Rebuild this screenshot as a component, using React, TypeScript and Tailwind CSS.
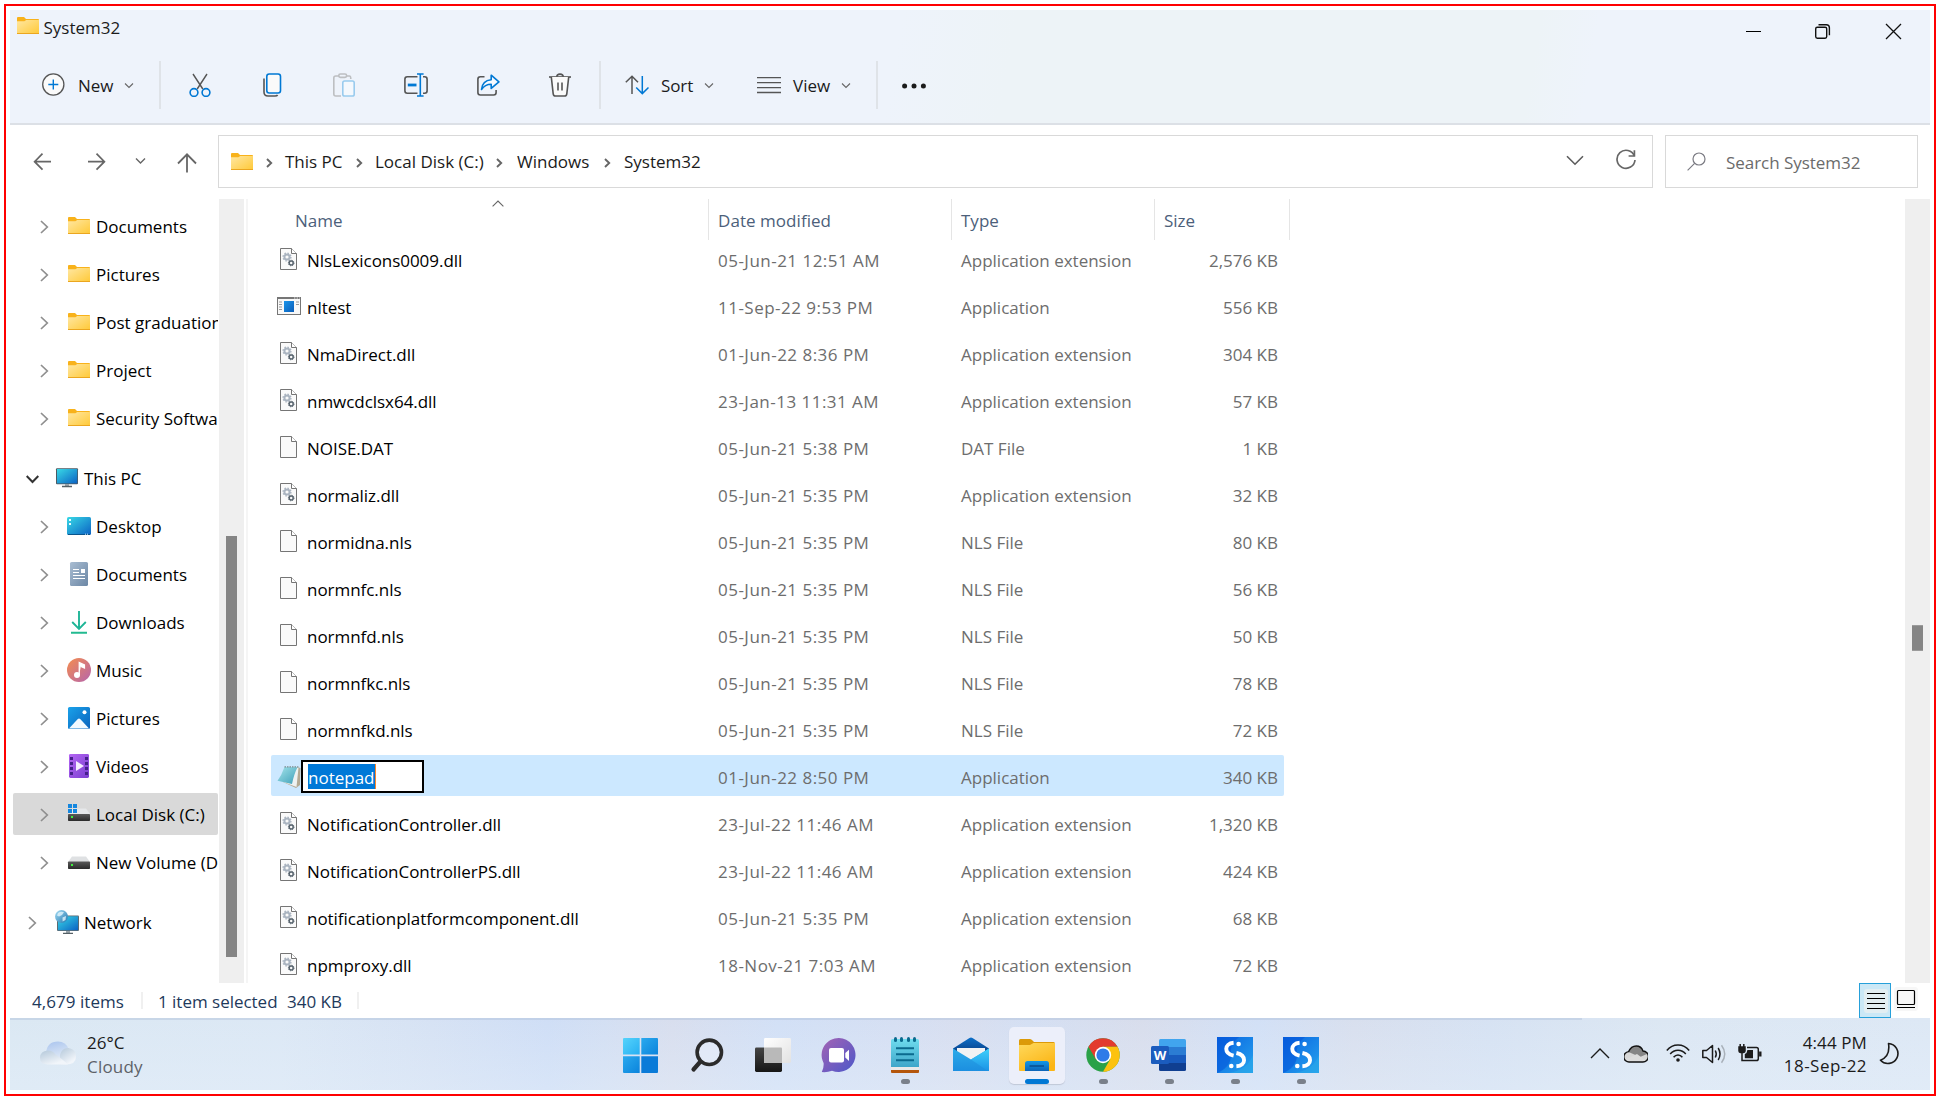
import React from "react";

type P = { className?: string };

/* Shared gradients used by the coloured icons. */
function Gradients() {
  const g = (id: string, a: string, b: string, x2 = 1, y2 = 1) => (
    <linearGradient id={id} x1="0" y1="0" x2={x2} y2={y2}>
      <stop offset="0" stopColor={a} />
      <stop offset="1" stopColor={b} />
    </linearGradient>
  );
  return (
    <svg width="0" height="0" className="absolute" aria-hidden="true">
      <defs>
        {g("gFolder", "#ffe7a2", "#ffc937")}
        {g("gScreen", "#38d9e6", "#0b62c4")}
        {g("gDoc", "#a9bdd2", "#6c87a5")}
        {g("gMusic", "#f58d4e", "#b565ad")}
        {g("gPic", "#1aa2ea", "#0a63bd")}
        {g("gVid", "#b465f3", "#7a3fd0")}
        {g("gApp", "#1a95ea", "#0a5cb8")}
        {g("gDrive", "#5a5a5a", "#2a2a2a", 0, 1)}
        {g("gPad", "#a5e4ea", "#3d9fb9")}
        {g("gGlobe", "#a7def5", "#2177b0")}
        {g("gWinA", "#56d3fb", "#26aff2")}
        {g("gWinB", "#2aa9ee", "#0b84dc")}
        {g("gTask", "#454545", "#161616", 0, 1)}
        {g("gTask2", "#ffffff", "#e2e2e2")}
        {g("gChat", "#a463b4", "#4c57c9")}
        {g("gNote", "#6fdcee", "#3fa6c9", 0, 1)}
        {g("gMailTop", "#0c6fc8", "#0a3f86", 0, 1)}
        {g("gMailL", "#2cabe9", "#1c8fe0", 0, 1)}
        {g("gMailR", "#40d0fa", "#1a93e6", 0, 1)}
        {g("gExp", "#ffd95c", "#fbb515", 0.6, 1)}
        {g("gExpB", "#1397e6", "#0c64b8", 0, 1)}
        {g("gS", "#0a62e0", "#25a3ee")}
        {g("gCloud", "#a9c4ee", "#e2ebf6", 0.3, 1)}
        {g("gCloud2", "#b4c8da", "#f1f5fa", 0.6, 0.9)}
      </defs>
    </svg>
  );
}

const Folder = ({ className = "" }: P) => (
  <svg width="22" height="17" viewBox="0 0 22 17" className={`shrink-0 ${className}`}>
    <path d="M0 1Q0 0 1 0H7L9 2H21.2Q22 2 22 3V7H0Z" fill="#f8b21b" />
    <path d="M0 4.2H7.4L9.2 3H22V16.2Q22 17 21 17H1Q0 17 0 16Z" fill="url(#gFolder)" />
    <path d="M0 16.5H22" stroke="#eba61f" />
  </svg>
);

const ChevronDown = ({ w = 10, className = "" }: P & { w?: number }) => (
  <svg width={w} height="7" viewBox="0 0 10 7" className={`shrink-0 ${className}`} fill="none" stroke="currentColor" strokeWidth="1.1">
    <path d="M1 1.5L5 5.5L9 1.5" />
  </svg>
);

const ChevronRight = ({ className = "" }: P) => (
  <svg width="9" height="14" viewBox="0 0 9 14" className={`shrink-0 text-[#8f8f8f] ${className}`} fill="none" stroke="currentColor" strokeWidth="1.7">
    <path d="M1 1L7.3 7L1 13" />
  </svg>
);

const CrumbArrow = ({ className = "" }: P) => (
  <svg width="8" height="10" viewBox="0 0 8 10" className={`mt-[2px] shrink-0 ${className}`} fill="none" stroke="#666" strokeWidth="1.9">
    <path d="M1 1L5.2 5L1 9" />
  </svg>
);

const Tool = ({ children, className = "" }: P & { children: React.ReactNode }) => (
  <svg width="24" height="24" viewBox="0 0 24 24" fill="none" stroke="#555" strokeWidth="1.6" className={`shrink-0 ${className}`}>
    {children}
  </svg>
);

const B = "#0078d4";

const Divider = ({ className = "" }: P) => <div className={`h-12 w-[2px] shrink-0 bg-[#dfe3e8] ${className}`} />;

function TitleBar() {
  return (
    <div className="flex h-[51px] items-start">
      <div className="flex h-[34px] items-center pl-[7px]">
        <Folder className="-mt-[3px]" />
        <span className="mt-[2px] ml-[4.5px] text-[#1b1b1b]">System32</span>
      </div>
      <div className="ml-auto flex h-[43px] items-center pr-[28px]">
        <svg width="17" height="17" viewBox="0 0 17 17" className="text-black" stroke="currentColor">
          <path d="M1 8.5H16" />
        </svg>
        <svg width="17" height="17" viewBox="0 0 17 17" fill="none" stroke="#111" strokeWidth="1.4" className="ml-[52px]">
          <rect x="1.7" y="4.2" width="11" height="11" rx="1.6" />
          <path d="M4.5 1.7H12.3Q15.4 1.7 15.4 4.8V12.2" />
        </svg>
        <svg width="17" height="17" viewBox="0 0 17 17" stroke="#111" strokeWidth="1.3" className="ml-[54px]">
          <path d="M1 1L16 16M16 1L1 16" />
        </svg>
      </div>
    </div>
  );
}

function Toolbar() {
  return (
    <div className="flex h-12 items-center pl-[31px] text-[#1b1b1b]">
      <Tool>
        <circle cx="12.3" cy="11.5" r="10.6" fill="#fafafa" strokeWidth="1.3" />
        <path d="M12.3 6.5V16.5M7.3 11.5H17.3" stroke={B} strokeWidth="1.4" />
      </Tool>
      <span className="mt-[2px] ml-[13px] w-[37px]">New</span>
      <ChevronDown className="ml-[9px] text-[#666]" />
      <Divider className="ml-[25px]" />
      <div className="ml-[27px] flex gap-12">
        <Tool>
          <path d="M5 1L14.8 16M19 1L9.2 16" strokeWidth="1.4" />
          <circle cx="6" cy="19.5" r="3.9" stroke={B} />
          <circle cx="18" cy="19.5" r="3.9" stroke={B} />
        </Tool>
        <Tool>
          <path d="M4 5.5V19Q4 23 8 23H15Q17 23 17.6 22" />
          <rect x="6.8" y="1" width="13.7" height="19" rx="2.4" fill="#fafafa" stroke={B} />
        </Tool>
        <Tool>
          <path d="M7 3H3.8Q1.8 3 1.8 5V21Q1.8 23 3.8 23H9M14.5 3H17.5Q18.8 3 18.8 6" stroke="#bdbfc2" />
          <rect x="6.8" y="1" width="7.8" height="3.4" rx="1.6" stroke="#bdbfc2" />
          <rect x="10.8" y="8" width="11.4" height="15" rx="1.8" fill="#f4f8fd" stroke="#99cbee" />
        </Tool>
        <Tool>
          <path d="M13.5 3.8H3.3Q.9 3.8.9 6.2V17.8Q.9 20.2 3.3 20.2H13.5M19 3.8H20.7Q23.1 3.8 23.1 6.2V17.8Q23.1 20.2 20.7 20.2H19" />
          <path d="M3.8 12H12.5" stroke={B} strokeWidth="2.8" />
          <path d="M16.3 1V23M13 1H19.6M13 23H19.6" stroke={B} />
        </Tool>
        <Tool>
          <path d="M8.5 3.7H4.4Q1.9 3.7 1.9 6.2V19.5Q1.9 22 4.4 22H17.6Q20.1 22 20.1 19.5V17" />
          <path d="M5.5 16.5C6 10.5 9 7.3 15.2 6.7V2.2L22.9 8.9L15.2 15.4V11.2C10.5 11.2 8 12.6 5.5 16.5Z" stroke={B} strokeLinejoin="round" fill="#f7faff" />
        </Tool>
        <Tool>
          <path d="M1 4H23" />
          <path d="M3.3 4L5.2 20.8Q5.5 23 7.6 23H16.4Q18.5 23 18.8 20.8L20.7 4" fill="#fafafa" />
          <path d="M8.8 3.8C8.8.2 15.2.2 15.2 3.8M10 9.5V17.5M14 9.5V17.5" />
        </Tool>
      </div>
      <Divider className="ml-[27px]" />
      <Tool className="ml-6">
        <path d="M7 21V3.2M.8 9.3L7 3.2L13 9.3" strokeWidth="1.5" />
        <path d="M17.3 3V20.5M11.2 14.5L17.3 20.6L23.5 14.5" stroke={B} strokeWidth="1.5" />
      </Tool>
      <span className="mt-[2px] ml-[12px] w-[34px] tracking-[-0.1px]">Sort</span>
      <ChevronDown className="ml-[9px] text-[#666]" />
      <Tool className="ml-[43px]">
        <path d="M0 4.7H24M0 9.7H24M0 14.7H24M0 19.5H24" strokeWidth="1.3" />
      </Tool>
      <span className="mt-[2px] ml-3 w-[40px]">View</span>
      <ChevronDown className="ml-2 text-[#666]" />
      <Divider className="ml-[25px]" />
      <svg width="24" height="6" viewBox="0 0 24 6" className="mt-[2px] ml-6 shrink-0" fill="#1b1b1b">
        <circle cx="2.6" cy="3" r="2.5" />
        <circle cx="12" cy="3" r="2.5" />
        <circle cx="21.4" cy="3" r="2.5" />
      </svg>
    </div>
  );
}

function AddressRow() {
  return (
    <div className="flex h-[74px] items-start pt-[10px] pr-3 text-[#1b1b1b]">
      <div className="flex h-[53px] w-[208px] shrink-0 items-center text-[#666]">
        <svg width="19" height="18" viewBox="0 0 19 18" className="ml-[23px]" fill="none" stroke="currentColor" strokeWidth="1.7">
          <path d="M18 8.7H2M9.5 .7L1.6 8.7L9.5 16.7" />
        </svg>
        <svg width="19" height="18" viewBox="0 0 19 18" className="ml-[35px]" fill="none" stroke="currentColor" strokeWidth="1.7">
          <path d="M1 8.7H17M9.5 .7L17.4 8.7L9.5 16.7" />
        </svg>
        <svg width="11" height="8" viewBox="0 0 11 8" className="-mt-[2px] ml-[29px]" fill="none" stroke="currentColor" strokeWidth="1.4">
          <path d="M1 1.5L5.5 6L10 1.5" />
        </svg>
        <svg width="20" height="20" viewBox="0 0 20 20" className="mt-[3px] ml-[31px]" fill="none" stroke="currentColor" strokeWidth="1.8">
          <path d="M10 19.5V1.5M1 10.5L10 1.3L19 10.5" />
        </svg>
      </div>
      <div className="flex h-[53px] w-[1435px] shrink-0 items-center border border-[#d9d9d9] pl-3">
        <Folder className="-mt-px" />
        <CrumbArrow className="ml-[13px]" />
        <span className="ml-[11px] w-[58px]">This PC</span>
        <CrumbArrow className="ml-[13px]" />
        <span className="ml-[11px] w-[109px]">Local Disk (C:)</span>
        <CrumbArrow className="ml-[12px]" />
        <span className="ml-[13px] w-[75px]">Windows</span>
        <CrumbArrow className="ml-[12px]" />
        <span className="ml-[12px]">System32</span>
        <svg width="18" height="11" viewBox="0 0 18 11" className="-mt-[3px] ml-auto" fill="none" stroke="#5c5c5c" strokeWidth="1.6">
          <path d="M1 1.2L9 9.2L17 1.2" />
        </svg>
        <svg width="22" height="22" viewBox="0 0 22 22" className="-mt-[3px] mr-[15px] ml-[31px]" fill="none" stroke="#666" strokeWidth="1.7">
          <path d="M19.4 7A9 9 0 1 0 20 11" />
          <path d="M19.4 1.2V7H13.6" />
        </svg>
      </div>
      <div className="ml-3 flex h-[53px] w-[253px] shrink-0 items-center border border-[#d9d9d9] pl-[21px] text-[#6b6b6b]">
        <svg width="19" height="19" viewBox="0 0 19 19" className="-mt-px" fill="none" stroke="#7a7a82" strokeWidth="1.2">
          <circle cx="12" cy="7" r="6" />
          <path d="M7.6 11.3L.6 18.3" />
        </svg>
        <span className="mt-[2px] ml-[20px] tracking-[-0.04px] whitespace-nowrap">Search System32</span>
      </div>
    </div>
  );
}

/* Navigation pane icons, drawn in a 24 × 24 box. */
const Nav24 = ({ children }: { children: React.ReactNode }) => (
  <svg width="24" height="24" viewBox="0 0 24 24" className="shrink-0">
    {children}
  </svg>
);

const icons = {
  folder: (
    <Nav24>
      <g transform="translate(1 3)">
        <path d="M0 1Q0 0 1 0H7L9 2H21.2Q22 2 22 3V7H0Z" fill="#f8b21b" />
        <path d="M0 4.2H7.4L9.2 3H22V16.2Q22 17 21 17H1Q0 17 0 16Z" fill="url(#gFolder)" />
        <path d="M0 16.5H22" stroke="#eba61f" />
      </g>
    </Nav24>
  ),
  pc: (
    <Nav24>
      <rect x="1" y="2.3" width="22" height="16" rx="1" fill="#4b5a63" />
      <rect x="2" y="3" width="20.2" height="14.4" fill="url(#gScreen)" />
      <path d="M10 18H14V20H10Z" fill="#9aa4ab" />
      <path d="M7 20.5H17" stroke="#556066" strokeWidth="1.4" />
    </Nav24>
  ),
  desktop: (
    <Nav24>
      <rect y="3" width="24" height="18" rx="1.6" fill="url(#gScreen)" />
      <path d="M2 5H4V7H2ZM2 9H4V11H2Z" fill="#e8fbff" />
      <path d="M1 20.5H23" stroke="#0a558c" />
      <path d="M18 20.2H22" stroke="#cfe9fa" strokeDasharray="1 1" />
    </Nav24>
  ),
  documents: (
    <Nav24>
      <rect x="3" width="18" height="24" rx="1.6" fill="url(#gDoc)" />
      <path d="M6 7.5H12M6 10.5H12M6 13.5H18M6 16.5H18" stroke="#fff" strokeWidth="1.2" />
      <rect x="14" y="7" width="4" height="4" fill="#fff" />
    </Nav24>
  ),
  downloads: (
    <Nav24>
      <path d="M12 1V18.5M5.2 12L12 18.8L18.8 12" fill="none" stroke="#1fb597" strokeWidth="1.9" />
      <path d="M4 22.7H20" stroke="#22ba90" strokeWidth="2" />
    </Nav24>
  ),
  music: (
    <Nav24>
      <circle cx="12" cy="12" r="12" fill="url(#gMusic)" />
      <circle cx="10" cy="17" r="3" fill="#fff" />
      <path d="M12.2 17V4.5L17.5 7V10L13.8 8.4" fill="#fff" stroke="#fff" strokeWidth="1.2" />
    </Nav24>
  ),
  pictures: (
    <Nav24>
      <rect x="1" y="1" width="22" height="22" rx="1.6" fill="url(#gPic)" />
      <path d="M2 22.4L10.8 13Q12 11.8 13.2 13L22 22.4Z" fill="#f2f9ff" />
      <circle cx="17.5" cy="6.3" r="2" fill="#fff" />
    </Nav24>
  ),
  videos: (
    <Nav24>
      <rect x="2" width="20" height="24" rx="1.4" fill="url(#gVid)" />
      <path d="M3 3H6V6H3ZM3 8H6V11H3ZM3 13H6V16H3ZM3 18H6V21H3ZM18 3H21V6H18ZM18 8H21V11H18ZM18 13H21V16H18ZM18 18H21V21H18Z" fill="#45208a" />
      <path d="M9 7L17 12L9 17Z" fill="#f5edff" />
    </Nav24>
  ),
  disk: (
    <Nav24>
      <path d="M5 6.5H19L23 12H1Z" fill="#e6e8ea" />
      <rect x="1" y="12" width="22" height="7" rx=".8" fill="url(#gDrive)" />
      <path d="M4 14H6V16H4Z" fill="#3ef03e" />
      <path d="M1 2H5V6H1ZM6 2H10V6H6ZM1 7H5V11H1ZM6 7H10V11H6Z" fill="#1487df" />
    </Nav24>
  ),
  volume: (
    <Nav24>
      <path d="M5 6.5H19L23 12H1Z" fill="#dfe1e3" />
      <rect x="1" y="11.5" width="22" height="7.5" rx=".8" fill="url(#gDrive)" />
      <path d="M4 14H6V16H4Z" fill="#3ef03e" />
    </Nav24>
  ),
  network: (
    <Nav24>
      <rect x="2" y="5.5" width="22" height="15.5" rx="1" fill="#5b6a72" />
      <rect x="3" y="6.3" width="20" height="13.9" fill="url(#gScreen)" />
      <path d="M11 21H15V23H11Z" fill="#9aa4ab" />
      <path d="M8 23.3H18" stroke="#556066" strokeWidth="1.3" />
      <circle cx="6.5" cy="6.5" r="6.5" fill="url(#gGlobe)" />
      <path d="M3 3Q6 .8 9 2.2L7 5L4 6.4L2 5.5ZM7.5 7.5L11 6L10.5 10L7.6 11.5Z" fill="#e2f5fc" opacity=".8" />
    </Nav24>
  ),
};

type NavItem = { label: string; icon: keyof typeof icons; open?: boolean; top?: boolean; active?: boolean };

const quick: NavItem[] = ["Documents", "Pictures", "Post graduation", "Project", "Security Software"].map((label) => ({ label, icon: "folder" }));
const thisPc: NavItem[] = [
  { label: "This PC", icon: "pc", open: true, top: true },
  { label: "Desktop", icon: "desktop" },
  { label: "Documents", icon: "documents" },
  { label: "Downloads", icon: "downloads" },
  { label: "Music", icon: "music" },
  { label: "Pictures", icon: "pictures" },
  { label: "Videos", icon: "videos" },
  { label: "Local Disk (C:)", icon: "disk", active: true },
  { label: "New Volume (D:)", icon: "volume" },
];
const network: NavItem[] = [{ label: "Network", icon: "network", top: true }];

function NavRow({ item }: { item: NavItem }) {
  return (
    <div className={`flex h-[42px] w-[205px] items-center overflow-hidden rounded-[2px] ${item.active ? "bg-[#d9d9d9]" : ""} ${item.top ? "pl-[15px]" : "pl-[27px]"}`}>
      {item.open ? (
        <svg width="13" height="9" viewBox="0 0 13 9" className="mt-[2px] -ml-[2px] mr-[1px] shrink-0" fill="none" stroke="#333" strokeWidth="2">
          <path d="M.7 1L6.5 7L12.3 1" />
        </svg>
      ) : (
        <ChevronRight className="mt-[2px] mr-[3px]" />
      )}
      <span className="ml-[15px]">{icons[item.icon]}</span>
      <span className={`mt-[2px] whitespace-nowrap text-black ${item.top ? "ml-[5px]" : "ml-[5px]"}`}>{item.label}</span>
    </div>
  );
}

function Sidebar() {
  return (
    <div className="flex h-[784px] w-[238px] shrink-0">
      <div className="flex w-[209px] flex-col gap-[18px] pt-[6px] pl-[3px]">
        {[quick, thisPc, network].map((group, i) => (
          <div key={i} className="flex flex-col gap-[6px]">
            {group.map((item) => (
              <NavRow key={item.label} item={item} />
            ))}
          </div>
        ))}
      </div>
      <div className="flex w-[25px] justify-center bg-[#efefef]">
        <div className="mt-[337px] h-[421px] w-[11px] bg-[#858585]" />
      </div>
      <div className="ml-[2px] w-[2px] bg-[#f5f5f5]" />
    </div>
  );
}

const Page = ({ gears }: { gears?: boolean }) => (
  <svg width="18" height="23" viewBox="0 0 18 23" className="ml-[9px] shrink-0">
    <path d="M.5.5H11.5L16.5 5.5V21.5H.5Z" fill="#fafafa" stroke="#757575" />
    <path d="M11.5.5V5.5H16.5" fill="#fff" stroke="#757575" />
    {gears && (
      <g fill="none">
        <circle cx="7" cy="9" r="2.6" stroke="#aab4c0" strokeWidth="2" />
        <circle cx="7" cy="9" r="3.9" stroke="#aab4c0" strokeWidth="1.4" strokeDasharray="1.5 1.56" />
        <circle cx="11.2" cy="15" r="2" stroke="#59656f" strokeWidth="1.5" />
        <circle cx="11.2" cy="15" r="2.8" stroke="#59656f" strokeWidth="1" strokeDasharray="1.1 1.1" />
      </g>
    )}
  </svg>
);

const AppIcon = () => (
  <svg width="24" height="19" viewBox="0 0 24 19" className="ml-[6px] shrink-0">
    <rect x=".5" y=".5" width="23" height="17" fill="#f8f8f8" stroke="#767676" />
    <path d="M0 1H24" stroke="#767676" strokeWidth="2" />
    <path d="M17 1H23" stroke="#e5e5e5" strokeDasharray="1.4 1.2" />
    <path d="M2 5H5M2 7.5H5M2 10H5M2 12.5H5M19 5H22M19 7.5H22" stroke="#9a9a9a" />
    <rect x="7" y="4" width="10" height="11" fill="url(#gApp)" />
  </svg>
);

const NotepadSmall = () => (
  <svg width="24" height="24" viewBox="0 0 24 24" className="ml-[6px] shrink-0">
    <path d="M20 2L23.5 3L23 20L19 23L6 17Z" fill="#b3a993" />
    <path d="M9 3L21.5 2.5L19.5 22L5 16.5Z" fill="#eef2f2" />
    <path d="M7.5 2L20.5 2.2Q17 9 15 19L.5 15.8Q4.5 10.5 7.5 2Z" fill="url(#gPad)" />
    <path d="M7.5 1.8L22 2" stroke="#7c8b8e" strokeWidth="1.2" strokeDasharray="1.5 1" />
  </svg>
);

const E = "Application extension";
const N = "NLS File";
type FileRow = [string, string, string, string];
const files: FileRow[] = [
  ["NlsLexicons0009.dll", "05-Jun-21 12:51 AM", E, "2,576 KB"],
  ["nltest", "11-Sep-22 9:53 PM", "Application", "556 KB"],
  ["NmaDirect.dll", "01-Jun-22 8:36 PM", E, "304 KB"],
  ["nmwcdclsx64.dll", "23-Jan-13 11:31 AM", E, "57 KB"],
  ["NOISE.DAT", "05-Jun-21 5:38 PM", "DAT File", "1 KB"],
  ["normaliz.dll", "05-Jun-21 5:35 PM", E, "32 KB"],
  ["normidna.nls", "05-Jun-21 5:35 PM", N, "80 KB"],
  ["normnfc.nls", "05-Jun-21 5:35 PM", N, "56 KB"],
  ["normnfd.nls", "05-Jun-21 5:35 PM", N, "50 KB"],
  ["normnfkc.nls", "05-Jun-21 5:35 PM", N, "78 KB"],
  ["normnfkd.nls", "05-Jun-21 5:35 PM", N, "72 KB"],
  ["notepad", "01-Jun-22 8:50 PM", "Application", "340 KB"],
  ["NotificationController.dll", "23-Jul-22 11:46 AM", E, "1,320 KB"],
  ["NotificationControllerPS.dll", "23-Jul-22 11:46 AM", E, "424 KB"],
  ["notificationplatformcomponent.dll", "05-Jun-21 5:35 PM", E, "68 KB"],
  ["npmproxy.dll", "18-Nov-21 7:03 AM", E, "72 KB"],
];

function FileLine({ row }: { row: FileRow }) {
  const [name, date, type, size] = row;
  const editing = name === "notepad";
  return (
    <div className={`flex h-[41px] w-[1013px] shrink-0 items-center rounded-[2px] ${editing ? "bg-[#cce8ff]" : ""}`}>
      <div className="flex w-[447px] items-center">
        <div className="flex w-[30px] shrink-0 pt-[2px]">
          {editing ? <NotepadSmall /> : name === "nltest" ? <AppIcon /> : <Page gears={name.endsWith(".dll")} />}
        </div>
        {editing ? (
          <div className="mt-[2px] flex h-[33px] w-[123px] items-center border-2 border-black bg-white pl-[5px]">
            <span className="h-[25px] w-[67px] bg-[#0078d7] leading-[27px] text-white">notepad</span>
            <span className="h-[25px] w-px bg-[#ff8728]" />
          </div>
        ) : (
          <span className="ml-[6px] pt-1 tracking-[-0.04px] whitespace-nowrap text-black">{name}</span>
        )}
      </div>
      <div className="w-[243px] pt-1 tracking-[0.48px] text-[#6d6d6d]">{date}</div>
      <div className="w-[203px] pt-1 text-[#6d6d6d]">{type}</div>
      <div className="w-[114px] pt-1 text-right text-[#6d6d6d]">{size}</div>
    </div>
  );
}

function FileList() {
  return (
    <div className="flex h-[784px] flex-1 flex-col overflow-hidden pl-[23px]">
      <div className="flex h-[41px] shrink-0 text-[#4c607a]">
        <div className="relative w-[438px] border-r border-[#e5e5e5] pt-[10px] pl-[24px]">
          Name
          <svg width="12" height="7" viewBox="0 0 12 7" className="absolute top-px left-[221px]" fill="none" stroke="#666" strokeWidth="1.1">
            <path d="M.6 6.4L6 1L11.4 6.4" />
          </svg>
        </div>
        <div className="w-[243px] border-r border-[#e5e5e5] pt-[10px] pl-[9px] tracking-[0.05px]">Date modified</div>
        <div className="w-[203px] border-r border-[#e5e5e5] pt-[10px] pl-[9px]">Type</div>
        <div className="w-[135px] border-r border-[#e5e5e5] pt-[10px] pl-[9px]">Size</div>
      </div>
      <div className="-mt-[2px] flex flex-col gap-[6px]">
        {files.map((row) => (
          <FileLine key={row[0]} row={row} />
        ))}
      </div>
    </div>
  );
}

function StatusBar() {
  return (
    <div className="flex h-[35px] items-center text-[#1e395b]">
      <span className="mt-[3px] ml-[22px] w-[93px] tracking-[0.05px]">4,679 items</span>
      <div className="ml-[16px] h-[17px] w-[2px] bg-[#f0f0f0]" />
      <span className="mt-[3px] ml-[15px] w-[118px] tracking-[-0.02px] whitespace-nowrap">1 item selected</span>
      <span className="mt-[3px] ml-[11px] w-[55px] whitespace-nowrap">340 KB</span>
      <div className="ml-[15px] h-[17px] w-[2px] bg-[#f0f0f0]" />
      <div className="ml-auto flex h-[35px] w-[32px] items-center justify-center border border-[#26a0da] bg-[#cbe8f6]">
        <svg width="24" height="24" viewBox="0 0 24 24" className="mt-px ml-[2px]">
          <rect width="24" height="24" rx="3" fill="#e3eef2" />
          <path d="M3 4.5H21M3 9.5H21M3 14.5H21M3 19.5H21" stroke="#000" />
        </svg>
      </div>
      <svg width="24" height="24" viewBox="0 0 24 24" className="-mt-[3px] mr-[12px] ml-[3px]" fill="none" stroke="#000">
        <rect width="24" height="24" rx="3" fill="#f7f7f7" stroke="none" />
        <rect x="3.5" y="3.5" width="17" height="14" rx="1" strokeWidth="1.2" />
        <path d="M3 20.5H21" />
      </svg>
    </div>
  );
}

/* Taskbar icons, drawn in a 36 × 36 box. */
const Big = ({ children }: { children: React.ReactNode }) => (
  <svg width="36" height="36" viewBox="0 0 36 36">
    {children}
  </svg>
);

const SApp = () => (
  <Big>
    <rect width="36" height="36" fill="url(#gS)" />
    <path d="M36 0V18Q30 33 12 36H36Z" fill="#2ba9ea" opacity=".6" />
    <path d="M0 36V0H22Q12 8 14 18Q14 30 0 36Z" fill="#0558da" opacity=".6" />
    <g fill="none" stroke="#fff" strokeWidth="3.9">
      <path d="M16.6 5.8C6.8 6.6 6.8 16.6 16.6 18.6" />
      <path d="M19.4 16C29.6 18.2 29.6 28.6 19.4 29.2" />
    </g>
    <circle cx="21.6" cy="7" r="2.3" fill="#fff" />
    <circle cx="14.3" cy="29" r="2.3" fill="#fff" />
  </Big>
);

const taskIcons: { id: string; running?: boolean; active?: boolean; icon: React.ReactNode }[] = [
  {
    id: "start",
    icon: (
      <Big>
        <path d="M0 2Q0 1 1 1H16.7V17.6H0Z" fill="url(#gWinA)" />
        <path d="M18.3 1H34Q35 1 35 2V17.6H18.3Z" fill="url(#gWinB)" />
        <path d="M0 19.2H16.7V36H1Q0 36 0 35Z" fill="url(#gWinB)" />
        <path d="M18.3 19.2H35V35Q35 36 34 36H18.3Z" fill="#0a7bd8" />
      </Big>
    ),
  },
  {
    id: "search",
    icon: (
      <Big>
        <circle cx="20.3" cy="15.3" r="12.2" fill="#e8effa" fillOpacity=".6" stroke="#2b2b2b" strokeWidth="3.6" />
        <path d="M11.5 24.5L4.5 32.5" stroke="#2b2b2b" strokeWidth="4.2" strokeLinecap="round" />
      </Big>
    ),
  },
  {
    id: "taskview",
    icon: (
      <Big>
        <rect y="10.5" width="27" height="24.5" rx="1.4" fill="url(#gTask)" />
        <rect x="9" y="1" width="27" height="25" rx="1.4" fill="url(#gTask2)" />
        <path d="M9 10.5H26Q27 10.5 27 11.5V26H9Z" fill="#b9b9b9" />
      </Big>
    ),
  },
  {
    id: "chat",
    icon: (
      <Big>
        <path d="M18 1A17 17 0 1 1 11 33.7Q6 35.6 .8 35Q3 31 2.6 26A17 17 0 0 1 18 1Z" fill="url(#gChat)" />
        <rect x="8" y="11" width="15" height="14.6" rx="2" fill="#fff" />
        <path d="M24.3 16L28 12.8V24L24.3 20.6Z" fill="#fff" />
      </Big>
    ),
  },
  {
    id: "notepad",
    running: true,
    icon: (
      <Big>
        <path d="M4 31H32V35Q32 36 31 36H5Q4 36 4 35Z" fill="#b4560c" />
        <path d="M4 28H32V33H4Z" fill="#e9e9e9" />
        <path d="M4 3.5Q4 2 5.5 2H30.5Q32 2 32 3.5V30H4Z" fill="url(#gNote)" />
        <path d="M9 11.3H27M9 17.3H27M9 23.3H27" stroke="#0b6a8e" strokeWidth="2" />
        <g fill="#0b6a8e">
          <rect x="7" width="3" height="5" rx="1.5" />
          <rect x="13" width="3" height="5" rx="1.5" />
          <rect x="20" width="3" height="5" rx="1.5" />
          <rect x="26" width="3" height="5" rx="1.5" />
        </g>
      </Big>
    ),
  },
  {
    id: "mail",
    icon: (
      <Big>
        <path d="M0 11.5L16.5 1Q18 .2 19.5 1L36 11.5V16H0Z" fill="url(#gMailTop)" />
        <path d="M4 11H32V20L18 28L4 20Z" fill="#f1f2f3" />
        <path d="M36 11.5V34H0V11.5L18 22.5Z" fill="url(#gMailL)" />
        <path d="M18 22.5L36 11.5V34H35Z" fill="url(#gMailR)" />
      </Big>
    ),
  },
  {
    id: "explorer",
    active: true,
    icon: (
      <Big>
        <path d="M0 3.5Q0 2 1.5 2H10.5Q12 2 13 3L15 5H34.5Q36 5 36 6.5V12H0Z" fill="#dc9a08" />
        <path d="M0 8H11L14.5 6H36V33Q36 34 35 34H1Q0 34 0 33Z" fill="url(#gExp)" />
        <path d="M6 34V26.5Q6 24 8.5 24H27.5Q30 24 30 26.5V34Z" fill="url(#gExpB)" />
        <path d="M10.5 29H25" stroke="#0a4c8c" strokeWidth="1.5" />
      </Big>
    ),
  },
  {
    id: "chrome",
    running: true,
    icon: (
      <Big>
        <circle cx="18" cy="18" r="16.7" fill="#2aa148" />
        <path d="M3.5 9.7A16.7 16.7 0 0 1 32.5 9.7L18 9.7L10.8 22.2Z" fill="#e33b2e" />
        <path d="M32.5 9.7A16.7 16.7 0 0 1 18 34.7L25.2 22.2L18 9.7Z" fill="#fcc20f" />
        <circle cx="18" cy="18" r="8.2" fill="#fff" />
        <circle cx="18" cy="18" r="6.6" fill="#2f7be8" />
      </Big>
    ),
  },
  {
    id: "word",
    running: true,
    icon: (
      <Big>
        <path d="M8 3.5Q8 2 9.5 2H33.5Q35 2 35 3.5V11H8Z" fill="#41a5ee" />
        <path d="M8 10H35V18.5H8Z" fill="#2b7cd3" />
        <path d="M8 18H35V26.5H8Z" fill="#185abd" />
        <path d="M8 26H35V32.5Q35 34 33.5 34H9.5Q8 34 8 32.5Z" fill="#103f91" />
        <rect y="9" width="18" height="18" rx="1.5" fill="#1b5cbe" />
        <text x="9" y="22.7" textAnchor="middle" fontSize="13" fontWeight="700" fill="#fff">
          W
        </text>
      </Big>
    ),
  },
  { id: "s1", running: true, icon: <SApp /> },
  { id: "s2", running: true, icon: <SApp /> },
];

function Tray() {
  return (
    <div className="ml-auto flex h-full items-center pr-[30px] text-[#1b1b1b]">
      <svg width="20" height="11" viewBox="0 0 20 11" className="-mt-[2px]" fill="none" stroke="currentColor" strokeWidth="1.4">
        <path d="M1 10L10 1L19 10" />
      </svg>
      <svg width="24" height="18" viewBox="0 0 24 18" className="ml-[14px]">
        <path d="M5.5 17A5.2 5.2 0 0 1 4.6 6.6Q7 1 12.3 1Q17.2 1 19 6A5.2 5.2 0 0 1 18.8 17Z" fill="#d7d7d7" />
        <path d="M4.6 6.6Q7 1 12.3 1Q17.2 1 19 6Q22 6.5 23 9L16 12L4.6 7Z" fill="#858585" />
        <path d="M1.2 14.5L13 9L21.5 15.5Q20 17 18 17H5.5Q2.5 17 1.2 14.5Z" fill="#dcdcdc" />
        <path d="M5.5 17A5.2 5.2 0 0 1 4.6 6.6Q7 1 12.3 1Q17.2 1 19 6A5.2 5.2 0 0 1 18.8 17Z" fill="none" stroke="#111" strokeWidth="1.4" />
      </svg>
      <svg width="24" height="20" viewBox="0 0 24 20" className="ml-[18px] -mt-[2px]" fill="none" stroke="currentColor" strokeWidth="1.5">
        <path d="M.8 7.5Q5.3 2 12 2T23.2 7.5M4.2 11Q7.3 7.2 12 7.2T19.8 11M7.6 14.3Q9.4 12 12 12T16.4 14.3" />
        <circle cx="12" cy="17" r="1.8" fill="currentColor" stroke="none" />
      </svg>
      <svg width="24" height="20" viewBox="0 0 24 20" className="ml-3" fill="none" stroke="currentColor" strokeWidth="1.5">
        <path d="M.8 6.5H4.5L10.5 1.5V18.5L4.5 13.5H.8Z" strokeLinejoin="round" />
        <path d="M13.3 6.5Q15.2 10 13.3 13.5M16.2 4Q19.8 10 16.2 16" />
        <path d="M19.5 1.2Q26 10 19.5 18.8" stroke="#a9b1ba" />
      </svg>
      <svg width="24" height="20" viewBox="0 0 24 20" className="-mt-[2px] ml-3" fill="none" stroke="currentColor" strokeWidth="1.5">
        <path d="M1 4H7V8Q7 9.4 5.5 9.4H2.5Q1 9.4 1 8ZM2.2 4V1M5.8 4V1" fill="currentColor" />
        <path d="M4 9V17.6H18.5Q20.3 17.6 20.3 15.8V6.2Q20.3 4.4 18.5 4.4H9" />
        <path d="M6.8 15.2V11Q9.2 10 9.4 7H15V15.2Z" fill="currentColor" stroke="none" />
        <path d="M22.3 8.5V13.5" strokeWidth="2.4" />
      </svg>
      <div className="ml-[13px] flex w-[92px] flex-col items-end whitespace-nowrap">
        <span className="h-[23px] leading-6 tracking-[0.1px]">4:44 PM</span>
        <span className="h-[24px] leading-6 tracking-[0.45px]">18-Sep-22</span>
      </div>
      <svg width="21" height="23" viewBox="0 0 21 23" className="-mt-[1px] ml-[12px]" fill="none" stroke="currentColor" strokeWidth="1.6">
        <path d="M9.5 1.5A10 10 0 1 1 1.5 18.2Q11.5 14.5 9.5 1.5Z" strokeLinejoin="round" />
      </svg>
    </div>
  );
}

function Taskbar() {
  return (
    <div className="relative h-[72px] bg-[linear-gradient(90deg,#dbe8f3_0%,#dce8f5_14%,#d6e2f4_22%,#cfdef6_28%,#d3dff3_31%,#d8deee_34.5%,#d2e0f6_40%,#d5dff3_46%,#d8deef_50%,#d4dff3_53%,#d8ddec_59%,#d2e0f6_65%,#d8dfee_70%,#d6e2f3_77%,#dce7f3_86%,#dde8f5_100%)]">
      <div className="absolute top-0 left-0 h-[2px] w-[1572px] bg-[#a9bbd466]" />
      <div className="flex h-full items-center bg-gradient-to-b from-transparent to-[#e6f0fb66]">
        <div className="flex h-full w-[598px] items-center pl-[30px]">
          <svg width="36" height="24" viewBox="0 0 36 24" className="-mt-[3px]">
            <path d="M6 12Q7 .5 18 .5Q26 .5 28.5 8L24 20H8Z" fill="url(#gCloud)" />
            <path d="M26 23.5H20V14Q22 6.5 28.5 7Q36 8 36 15.5Q36 23.5 26 23.5Z" fill="url(#gCloud2)" />
            <path d="M8 23.5Q0 23.5 0 16.5Q.5 10 7.5 9.5Q13 9.5 15.5 13.5Q21 17 28 23.5Z" fill="url(#gCloud2)" />
          </svg>
          <div className="ml-[11px] flex flex-col pt-[2px]">
            <span className="leading-6 text-[#1b1b1b]">26°C</span>
            <span className="leading-6 tracking-[0.2px] text-[#5d6268]">Cloudy</span>
          </div>
        </div>
        <div className="flex h-full">
          {taskIcons.map((t) => (
            <div key={t.id} className="flex h-full w-[66px] justify-center pt-[9px]">
              <div className={`flex h-[57px] w-[56px] flex-col items-center rounded-[5px] pt-[10px] ${t.active ? "bg-[#eceffa] shadow-[0_1px_1px_#c0c8d8]" : ""}`}>
                {t.icon}
                {t.active && <div className="mt-[6px] h-[5px] w-6 rounded-full bg-[#0078d4]" />}
                {t.running && <div className="mt-[6px] h-[5px] w-[9px] rounded-full bg-[#7a808a]" />}
              </div>
            </div>
          ))}
        </div>
        <Tray />
      </div>
    </div>
  );
}

export default function App() {
  return (
    <div className="h-[1100px] w-[1940px] overflow-hidden bg-white p-1 font-['Open_Sans','Noto_Sans',sans-serif] text-[17px] leading-6">
      <Gradients />
      <div className="h-[1092px] w-[1932px] border-2 border-[#ff0000] p-1">
        <div className="h-[115px] border-b-2 border-[#dce0e6] bg-[linear-gradient(100deg,#eef3fb_0%,#eef3fb_46%,#edf3f7_52%,#edf3f7_79%,#eef3fb_82%)]">
          <TitleBar />
          <Toolbar />
        </div>
        <AddressRow />
        <div className="flex">
          <Sidebar />
          <FileList />
          <div className="flex h-[784px] w-[25px] justify-center bg-[#efefef]">
            <div className="mt-[426px] h-[26px] w-[11px] border-y border-[#9b9b9b] bg-[#858585]" />
          </div>
        </div>
        <StatusBar />
        <Taskbar />
      </div>
    </div>
  );
}
